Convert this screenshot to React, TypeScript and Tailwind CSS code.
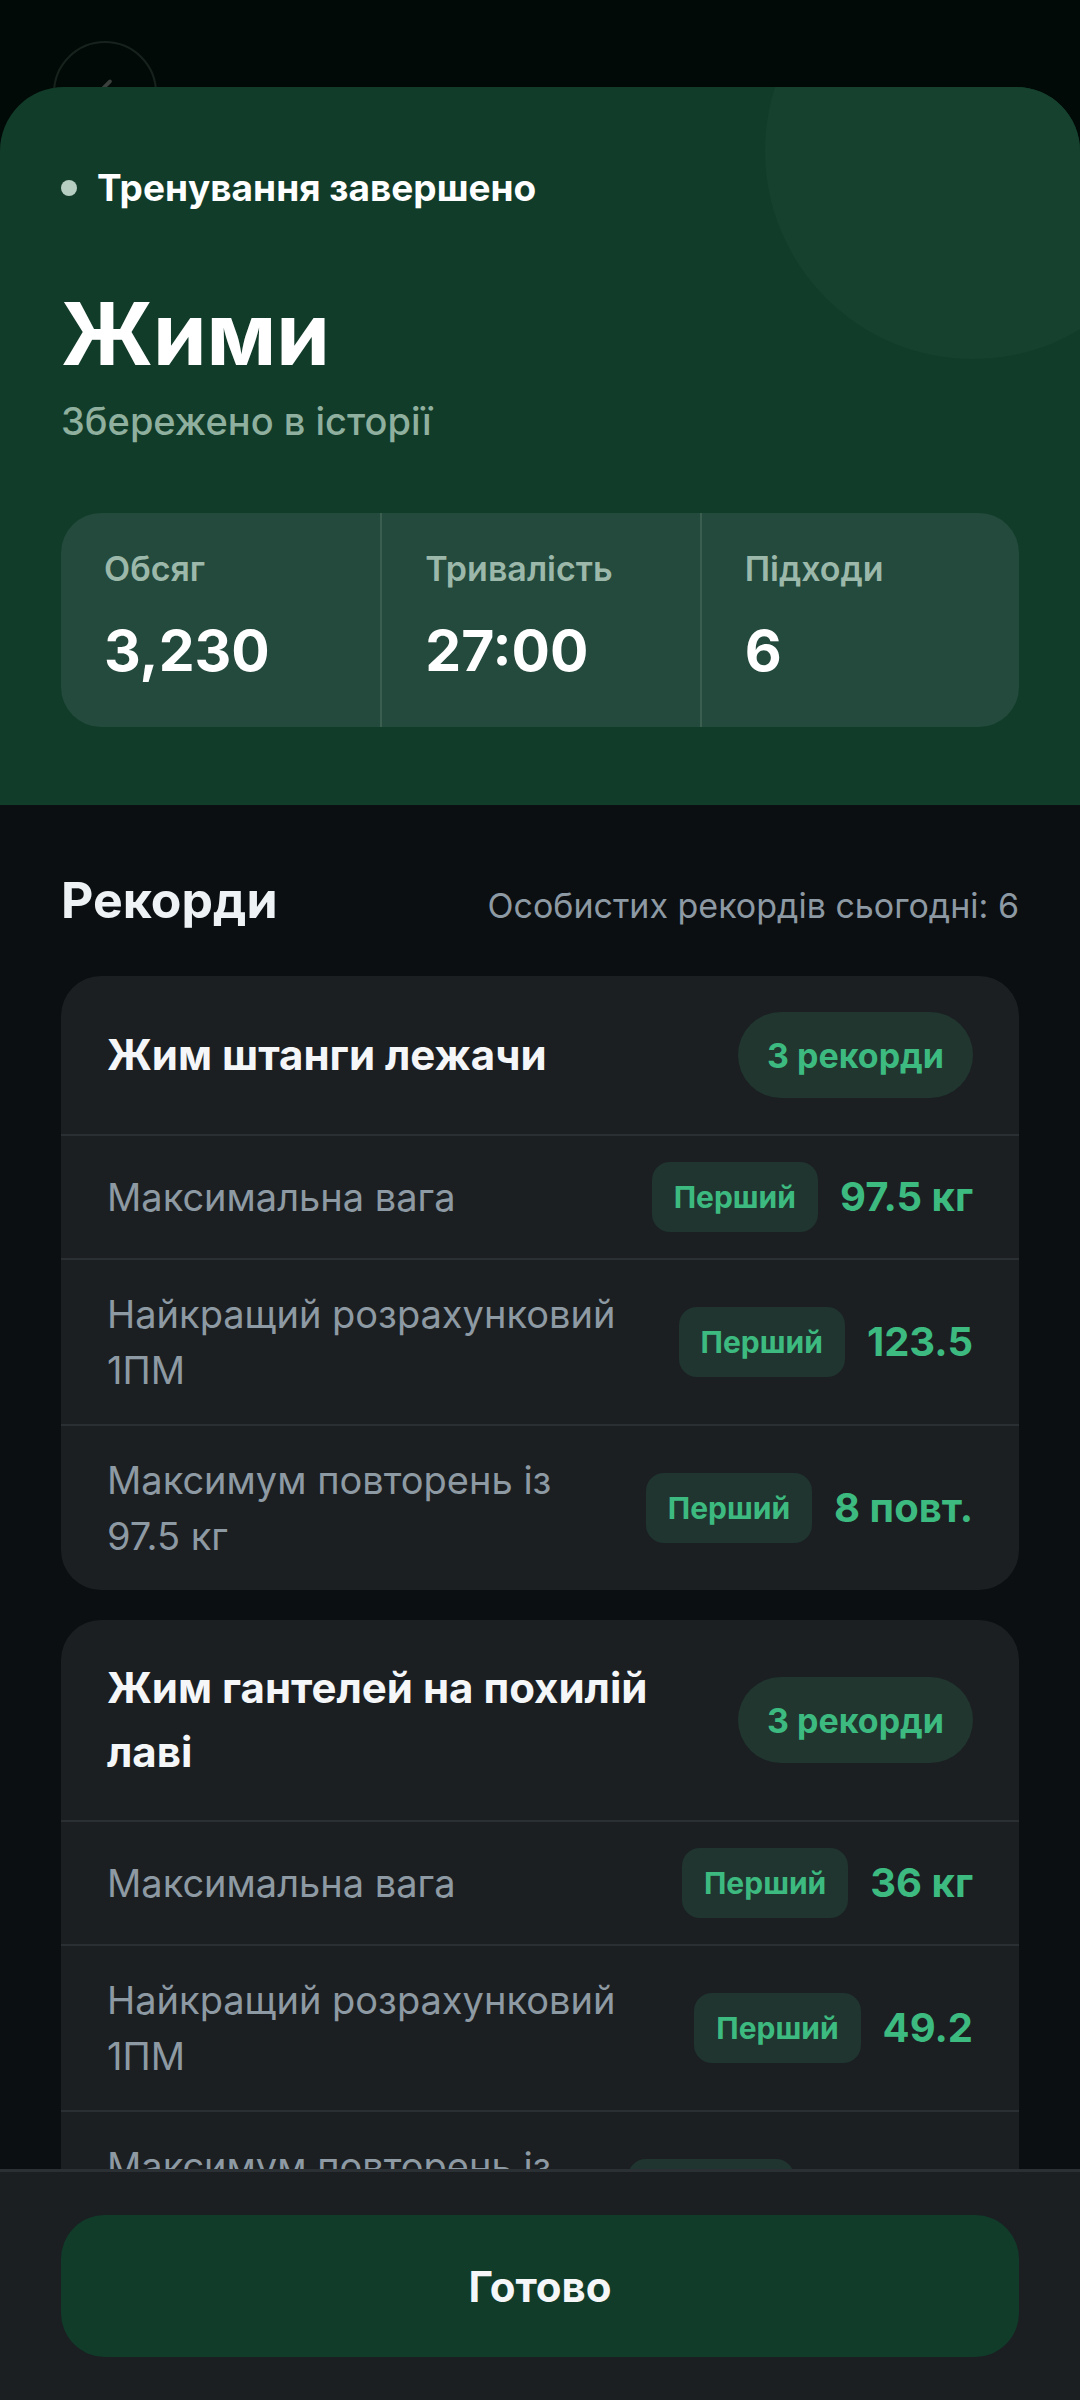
const stats = [
  { label: "Обсяг", value: "3,230" },
  { label: "Тривалість", value: "27:00" },
  { label: "Підходи", value: "6" },
];

const exercises = [
  {
    name: "Жим штанги лежачи",
    badge: "3 рекорди",
    records: [
      { label: "Максимальна вага", value: "97.5 кг" },
      { label: "Найкращий розрахунковий 1ПМ", value: "123.5" },
      { label: "Максимум повторень із 97.5 кг", value: "8 повт." },
    ],
  },
  {
    name: "Жим гантелей на похилій лаві",
    badge: "3 рекорди",
    records: [
      { label: "Максимальна вага", value: "36 кг" },
      { label: "Найкращий розрахунковий 1ПМ", value: "49.2" },
      { label: "Максимум повторень із 36 кг", value: "10 повт." },
    ],
  },
];

function RecordCard({ ex }: { ex: (typeof exercises)[number] }) {
  return (
    <div className="rounded-[40px] bg-[#1b1f22] overflow-hidden">
      <div className="flex items-center justify-between gap-6 px-[46px] py-[36px]">
        <h3 className="flex-1 min-w-0 text-[42px] leading-[64px] font-bold text-[#f4f6f8]">
          {ex.name}
        </h3>
        <span className="shrink-0 h-[86px] px-[29px] rounded-full bg-[#20362f] text-[#3dba80] text-[34px] font-bold flex items-center">
          {ex.badge}
        </span>
      </div>
      {ex.records.map((r) => (
        <div
          key={r.label}
          className="flex items-center justify-between gap-6 border-t-2 border-[#2a2f33] px-[46px] py-[26px]"
        >
          <span className="flex-1 min-w-0 text-[38px] leading-[56px] text-[#8e9aa3]">
            {r.label}
          </span>
          <div className="shrink-0 flex items-center gap-[22px]">
            <span className="h-[70px] px-[22px] rounded-[18px] bg-[#20352f] text-[#3dba80] text-[30px] font-bold flex items-center">
              Перший
            </span>
            <span className="text-[40px] font-bold text-[#3dba80]">{r.value}</span>
          </div>
        </div>
      ))}
    </div>
  );
}

export default function App() {
  return (
    <div className="relative w-[1080px] h-[2400px] overflow-hidden bg-[#0b0f12] font-['Inter',sans-serif]">
      {/* top + summary sheet */}
      <div className="relative bg-[#020a08] pt-[87px]">
        <button className="absolute left-[53px] top-[41px] w-[104px] h-[104px] rounded-full border-2 border-[#17221d] flex items-center justify-center">
          <svg width="40" height="40" viewBox="0 0 24 24" fill="none" stroke="#3b403d" strokeWidth="2.2" strokeLinecap="round" strokeLinejoin="round">
            <path d="M15 5l-7 7 7 7" />
          </svg>
        </button>
        <div className="relative z-10 overflow-hidden rounded-t-[64px] bg-[#123c2a] px-[61px] pt-[79px] pb-[78px]">
          <div className="absolute right-[-101px] top-[-144px] w-[416px] h-[416px] rounded-full bg-[#15412e]" />
          <div className="relative">
            <div className="flex items-center gap-[20px]">
              <span className="w-[16px] h-[16px] rounded-full bg-[#b6cdc1]" />
              <span className="text-[37px] leading-[44px] font-bold text-white">Тренування завершено</span>
            </div>
            <h1 className="mt-[81px] text-[86px] leading-[86px] font-bold text-white">Жими</h1>
            <p className="mt-[22px] text-[38px] leading-[44px] font-medium text-[#8fb09f]">Збережено в історії</p>
            <div className="mt-[70px] grid grid-cols-3 rounded-[40px] bg-[#234a3c] overflow-hidden">
              {stats.map((s, i) => (
                <div
                  key={s.label}
                  className={`px-[43px] pt-[36px] pb-[48px] ${i > 0 ? "border-l-2 border-[#3a5f50]" : ""}`}
                >
                  <div className="text-[34px] leading-[40px] font-semibold text-[#9cb8aa]">{s.label}</div>
                  <div className="mt-[33px] text-[57px] leading-[57px] font-bold text-white">{s.value}</div>
                </div>
              ))}
            </div>
          </div>
        </div>
      </div>

      {/* records */}
      <div className="px-[61px] pt-[70px]">
        <div className="flex items-baseline justify-between">
          <h2 className="text-[50px] leading-none font-bold text-[#eef2f5]">Рекорди</h2>
          <span className="text-[34px] leading-none text-[#8d99a3]">Особистих рекордів сьогодні: 6</span>
        </div>
        <div className="mt-[51px] flex flex-col gap-[30px]">
          {exercises.map((ex) => (
            <RecordCard key={ex.name} ex={ex} />
          ))}
        </div>
      </div>

      {/* bottom action bar */}
      <div className="absolute inset-x-0 bottom-0 z-20 h-[231px] border-t-[3px] border-[#2a3033] bg-[#1b1f22] px-[61px] pt-[43px]">
        <button className="w-full h-[142px] rounded-[44px] bg-[#113c2a] text-[42px] font-bold text-[#f4f6f8]">
          Готово
        </button>
      </div>
    </div>
  );
}
